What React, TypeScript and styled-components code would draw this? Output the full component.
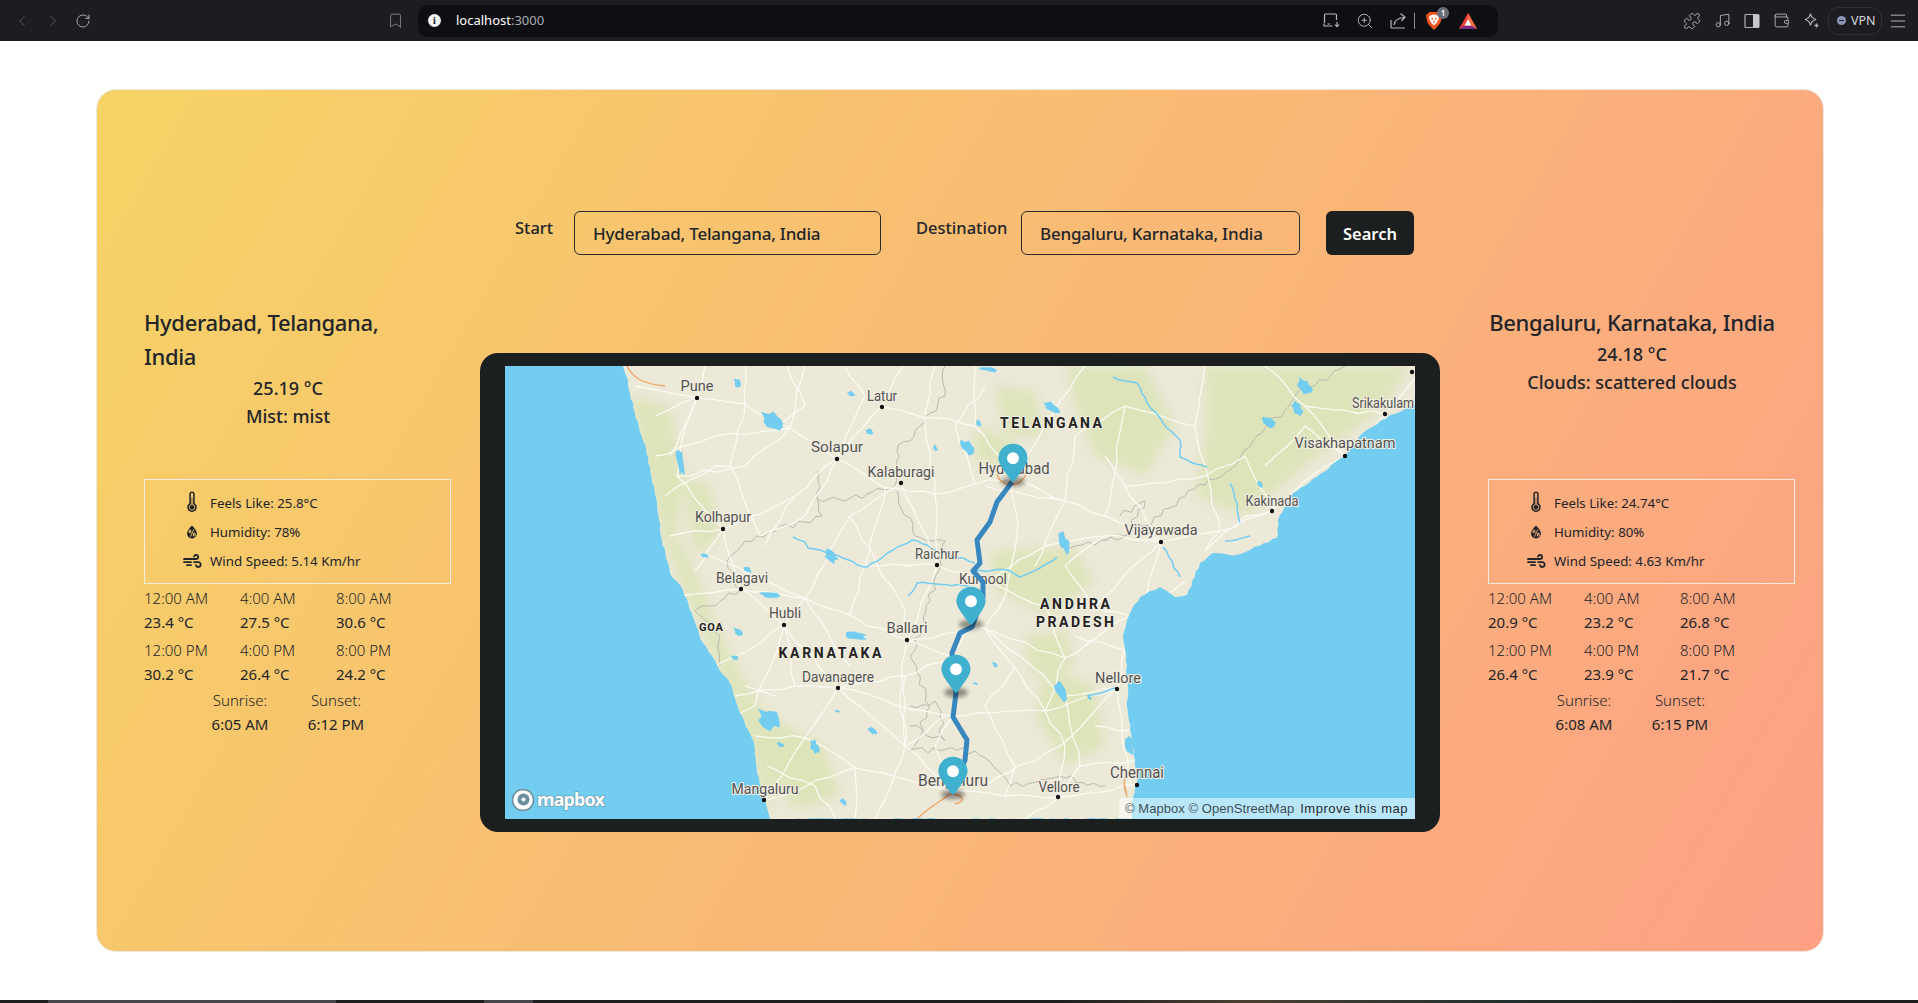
import React from 'react';
import styled, { createGlobalStyle } from 'styled-components';
import {
  ChevronLeft,
  ChevronRight,
  RotateCw,
  Bookmark,
  ZoomIn,
  Puzzle,
  Music,
  Wallet,
  Menu,
} from 'lucide-react';
import { WiThermometer, WiHumidity } from 'react-icons/wi';

const GlobalStyle = createGlobalStyle`
  html, body {
    margin: 0;
    padding: 0;
    height: 100%;
    overflow: hidden;
    background: #fff;
  }
  body {
    font-family: "Noto Sans", "Open Sans", sans-serif;
    color: #212529;
  }
  * { box-sizing: border-box; }
`;

const Page = styled.div`
  display: flex;
  flex-direction: column;
  height: 100vh;
`;

/* browser chrome */
const BrowserBar = styled.div`
  display: flex;
  align-items: center;
  height: 41px;
  flex: none;
  background: #1c1c21;
  color: #b4b4b8;
`;

const NavGroup = styled.div`
  display: flex;
  align-items: center;
  gap: 13px;
  width: 418px;
  padding: 0 14px 0 13px;
  flex: none;
`;

const BookmarkSlot = styled.div`
  display: flex;
  margin-left: auto;
`;

const UrlBar = styled.div`
  display: flex;
  align-items: center;
  width: 1080px;
  height: 32px;
  padding: 0 21px 0 10px;
  flex: none;
  border-radius: 10px;
  background: #0e0f13;
`;

const InfoDot = styled.span`
  display: flex;
  align-items: center;
  justify-content: center;
  width: 13px;
  height: 13px;
  border-radius: 50%;
  background: #f2f2f2;
  color: #111;
  font: 700 10px "Liberation Serif", serif;
`;

const UrlText = styled.span`
  margin-left: 15px;
  padding-bottom: 2px;
  font: 400 13px "Noto Sans", sans-serif;
  color: #fff;
  span { color: #a9abb0; }
`;

const UrlTools = styled.div`
  display: flex;
  align-items: center;
  margin-left: auto;
  gap: 16px;
  color: #b5b5b8;
`;

const Divider = styled.i`
  display: block;
  width: 1px;
  height: 16px;
  margin: 0 -5px 0 -9px;
  background: #8c8c90;
`;

const ShieldWrap = styled.div`
  position: relative;
  display: flex;
  margin-right: 1px;
`;

const ShieldBadge = styled.span`
  position: absolute;
  top: -5px;
  right: -7px;
  width: 12px;
  height: 12px;
  border-radius: 50%;
  background: #6b6e78;
  color: #fff;
  font: 600 8px/12px "Noto Sans", sans-serif;
  text-align: center;
`;

const ExtGroup = styled.div`
  display: flex;
  align-items: center;
  margin-left: 185px;
  gap: 13px;
  flex: none;
`;

const VpnPill = styled.div`
  display: flex;
  align-items: center;
  gap: 5px;
  width: 54px;
  height: 28px;
  margin: 0 -7px 0 -5px;
  padding: 0 0 1px 8px;
  border: 1px solid #2f3036;
  border-radius: 11px;
  color: #d9d9dc;
  font: 400 12.5px "Noto Sans", sans-serif;
`;

const VpnDot = styled.i`
  position: relative;
  display: block;
  width: 9px;
  height: 9px;
  border-radius: 50%;
  background: #8d95b5;
  &::after {
    content: '';
    position: absolute;
    left: 2px;
    right: 2px;
    top: 4px;
    height: 1px;
    background: #1c1c21;
  }
`;

/* page body */
const Main = styled.main`
  flex: 1;
  padding: 48px 94px 0 96px;
`;

const Card = styled.section`
  height: 863px;
  padding-top: 121px;
  border: 1px solid #ece8e0;
  border-radius: 20px;
  background: linear-gradient(120deg, #f6d365 0%, #fda085 100%);
`;

const SearchRow = styled.form`
  display: flex;
  align-items: flex-start;
  height: 44px;
  padding-left: 418px;
`;

const FieldLabel = styled.label<{ $w: number; $pad?: number }>`
  width: ${(p) => p.$w}px;
  padding-left: ${(p) => p.$pad ?? 0}px;
  flex: none;
  font-size: 16.5px;
  line-height: 34px;
  font-weight: 500;
`;

const FieldInput = styled.input<{ $w: number }>`
  width: ${(p) => p.$w}px;
  height: 44px;
  flex: none;
  padding: 1px 18px 0;
  border: 1px solid #2a2a2a;
  border-radius: 6px;
  background: transparent;
  color: #212529;
  font: 500 17px "Noto Sans", sans-serif;
  letter-spacing: -0.2px;
  outline: none;
`;

const SearchButton = styled.button`
  width: 88px;
  height: 44px;
  margin-left: 26px;
  flex: none;
  border: 0;
  border-radius: 6px;
  background: #1c1f1f;
  color: #fff;
  font: 600 16.5px "Noto Sans", sans-serif;
`;

const Columns = styled.div`
  display: flex;
  align-items: flex-start;
  margin-top: 51px;
  padding-left: 47px;
`;

const WeatherCol = styled.div<{ $gap?: number }>`
  width: 307px;
  flex: none;
  margin-left: ${(p) => p.$gap ?? 0}px;
`;

const WeatherHead = styled.div`
  display: flow-root;
  width: 288px;
  height: 173px;
  text-align: center;
`;

const CityName = styled.h4<{ $center?: boolean }>`
  margin: -1px 0 1px;
  font-size: 22px;
  line-height: 34px;
  font-weight: 500;
  letter-spacing: -0.35px;
  white-space: ${(p) => (p.$center ? 'nowrap' : 'normal')};
  text-align: ${(p) => (p.$center ? 'center' : 'left')};
`;

const HeadLine = styled.div`
  font-size: 18px;
  line-height: 28px;
  font-weight: 500;
`;

const StatsBox = styled.div`
  display: flex;
  flex-direction: column;
  justify-content: center;
  height: 105px;
  padding-left: 33px;
  border: 1px solid #f1ece0;
`;

const StatRow = styled.div`
  display: flex;
  align-items: center;
  height: 29px;
  font-size: 13.3px;
  font-weight: 450;
`;

const StatIcon = styled.span`
  display: flex;
  justify-content: center;
  width: 28px;
  margin-right: 4px;
  flex: none;
`;

const HourGrid = styled.div`
  display: grid;
  grid-template-columns: repeat(3, 96px);
  row-gap: 2px;
  margin-top: 2px;
`;

const SunRow = styled.div`
  display: grid;
  grid-template-columns: repeat(2, 96px);
  margin-left: 48px;
  text-align: center;
`;

const SlotLabel = styled.div`
  font-size: 15px;
  line-height: 25px;
  font-weight: 300;
`;

const SlotValue = styled.div`
  margin: -1px 0 1px;
  font-size: 15px;
  line-height: 25px;
  font-weight: 450;
`;

const MapFrame = styled.div`
  width: 960px;
  height: 479px;
  flex: none;
  margin: 47px 0 0 29px;
  padding: 13px 25px;
  border-radius: 18px;
  background: #1c1f1f;
`;

const MapBox = styled.div`
  position: relative;
  width: 910px;
  height: 453px;
  overflow: hidden;
  background: #73cdf1;
  svg { display: block; }
`;

const Attribution = styled.div`
  position: absolute;
  right: 0;
  bottom: 0;
  display: flex;
  gap: 6px;
  width: 296px;
  height: 21px;
  padding: 0 5px 0 6px;
  background: rgba(255, 255, 255, 0.5);
  color: rgba(0, 0, 0, 0.7);
  font: 400 13px/21px "Liberation Sans", sans-serif;
  letter-spacing: 0.05px;
  white-space: nowrap;
  b { font-weight: 400; letter-spacing: 0.5px; color: rgba(0, 0, 0, 0.85); }
`;

const TaskStrip = styled.div`
  display: flex;
  height: 3px;
  flex: none;
  padding-left: 48px;
  background: linear-gradient(90deg, #1e1e1e 55%, #4a4032 65%, #23302e 78%, #1e1e1e 90%);
`;

const TaskSeg = styled.i<{ $w: number; $gap?: number }>`
  display: block;
  width: ${(p) => p.$w}px;
  margin-left: ${(p) => p.$gap ?? 0}px;
  background: #45454a;
`;

/* map helpers: straight polylines get a small wobble so they read as roads and rivers */
const noise = (n: number) => {
  const v = Math.sin(n * 12.9898) * 43758.5453;
  return v - Math.floor(v);
};

const roughen = (d: string, amp: number, step: number) => {
  const pts = (d.match(/-?\d+(\.\d+)?/g) ?? []).map(Number);
  let out = `M${pts[0]} ${pts[1]}`;
  for (let i = 2; i < pts.length; i += 2) {
    const [x0, y0, x1, y1] = [pts[i - 2], pts[i - 1], pts[i], pts[i + 1]];
    const len = Math.hypot(x1 - x0, y1 - y0);
    const parts = Math.max(1, Math.round(len / step));
    for (let k = 1; k <= parts; k += 1) {
      const t = k / parts;
      const off = k === parts ? 0 : (noise(x0 * 3 + y1 * 7 + k) - 0.5) * 2 * amp;
      const x = x0 + (x1 - x0) * t + (-(y1 - y0) / (len || 1)) * off;
      const y = y0 + (y1 - y0) * t + ((x1 - x0) / (len || 1)) * off;
      out += `L${x.toFixed(1)} ${y.toFixed(1)}`;
    }
  }
  return out;
};

const blob = (x0: number, x1: number, y0: number, y1: number, i: number) => {
  const cx = (x0 + x1) / 2;
  const cy = (y0 + y1) / 2;
  const rx = (x1 - x0) / 2;
  const ry = (y1 - y0) / 2;
  let out = '';
  for (let k = 0; k < 12; k += 1) {
    const a = (k / 12) * Math.PI * 2;
    const r = 0.55 + noise(i * 5.1 + k) * 0.6;
    // slant so the long lakes lie from top left to bottom right
    const dx = Math.cos(a) * rx * r;
    const dy = Math.sin(a) * ry * r + (dx / (rx || 1)) * ry * 0.45;
    out += `${k ? 'L' : 'M'}${(cx + dx).toFixed(1)} ${(cy + dy).toFixed(1)}`;
  }
  return `${out}Z`;
};

/* map data, in map pixels (910 x 453) */
const LAND = `${roughen(
  'M118 0L123 14L125 27L130 47L138 74L145 101L152 137L157 174L165 207L178 224L188 251L198 277L212 299L225 317L235 347L248 374L252 407L258 431L265 453L627 453L628 431L632 417L630 394L625 364L622 341L623 321L620 284L618 271L625 247L635 231L655 221L670 231L682 229L695 197L708 187L732 189L772 172L773 154L788 127L812 111L838 91L858 67L885 49L910 39L910 0',
  0.9,
  5,
)}Z`;

const GREENS = [
  'M125 30L165 40L178 110L172 170L195 215L212 260L232 300L262 350L272 400L262 453L250 400L225 330L190 250L160 180L138 90Z',
  'M265 350L320 380L335 430L290 445L262 400Z',
  'M560 0L640 0L670 60L640 110L590 90L570 40Z',
  'M700 0L905 0L880 40L800 100L740 150L690 130L700 70Z',
  'M490 20L530 25L540 70L500 70Z',
  'M485 185L565 180L590 215L545 250L490 225Z',
  'M540 300L590 320L600 380L560 400L530 350Z',
  'M470 60L510 75L500 100L470 95Z',
  'M178 110L205 120L215 170L190 190Z',
  'M520 270L560 265L570 300L525 310Z',
];

const ROADS = [
  'M192 32L240 38L285 62L332 93L380 122L430 128L470 118L508 112',
  'M192 32L178 70L172 110L218 163L236 223L279 259L333 322L400 380L447 420',
  'M218 163L290 130L332 93L377 41L398 0',
  'M236 223L300 232L402 274L447 291L466 258',
  'M279 259L242 285L212 299',
  'M333 322L300 372L260 434',
  'M448 425L500 430L554 431L632 419',
  'M448 425L350 402L262 434',
  'M508 112L560 135L600 150L656 176L715 165L767 145L800 115L840 90L880 48L910 12',
  'M656 176L640 240L620 284L612 323L625 420',
  'M508 112L540 60L580 0',
  'M508 112L512 170L500 230L480 262L560 330L612 323',
  'M656 176L600 170L540 180L478 216L432 199L396 117',
  'M432 199L402 274L395 330L400 380',
  'M448 350L540 345L612 323',
  'M466 258L560 292L625 250',
  'M192 32L150 50',
  'M192 32L165 90',
  'M240 38L225 100L255 170L300 150L332 93',
  'M300 0L285 62L240 100L172 110',
  'M377 41L470 60L508 112',
  'M430 128L432 199',
  'M396 117L345 150L300 232',
  'M345 150L400 245L402 274',
  'M218 163L190 205',
  'M279 259L250 340L235 347',
  'M333 322L420 345L448 350',
  'M447 291L400 310L333 322',
  'M448 425L430 380L448 350',
  'M554 431L560 380L540 345L480 262',
  'M554 431L520 453',
  'M612 323L555 380L480 420',
  'M560 135L570 70L620 40L690 60L700 0',
  'M620 40L600 150',
  'M690 60L715 165L700 185',
  'M560 135L480 120',
  'M478 216L540 240L560 292L540 345',
  'M656 176L590 240L625 250',
  'M282 0L300 40L270 60',
  'M160 130L210 100L225 100',
  'M270 330L240 320',
  'M350 402L350 453',
  'M400 380L370 453',
  'M300 372L350 402',
  'M740 90L770 145',
  'M800 40L840 90',
  'M760 0L800 40L880 48',
  'M130 20L192 32L200 0',
  'M240 0L240 38',
  'M340 0L360 30L332 93',
  'M430 0L420 60L430 128',
  'M470 0L470 60',
  'M150 90L210 70L285 62',
  'M165 170L218 163',
  'M175 230L236 223',
  'M205 190L300 232L345 300',
  'M260 180L290 130',
  'M300 232L279 259L290 320L333 322',
  'M380 122L360 200L345 250',
  'M360 200L432 199',
  'M230 330L290 320',
  'M250 370L300 372',
  'M262 400L310 420',
  'M310 420L330 453',
  'M480 262L402 274',
  'M400 310L400 380L440 350',
  'M510 300L480 340L510 400L500 430',
  'M560 330L575 400L554 431',
  'M590 360L625 364',
  'M575 400L628 395',
  'M590 240L560 200L600 170',
  'M640 240L680 215',
  'M620 284L570 270',
  'M700 185L740 150L767 145',
  'M620 120L656 176',
  'M620 120L700 110L740 90',
  'M560 135L530 200',
  'M470 118L450 60L480 20',
  'M600 90L620 120',
  'M840 90L800 60L760 100',
];

const BORDERS = [
  'M313 105L312 132L340 135L390 120L392 85L415 60L440 30L440 0',
  'M312 132L317 150L270 165L240 175L222 195L235 225L205 240L190 245L215 270L215 300',
  'M392 125L410 170L440 175L425 235L405 290L425 340L405 385L470 385L505 420L555 410L600 420',
  'M600 175L640 160L680 130L730 100L790 30L840 0',
  'M560 185L620 170L640 135L615 150',
  'M405 340L430 335L440 375L405 360',
];

const RIVERS = [
  'M288 171L300 176L303 182L322 187L338 192L352 199L362 201L388 184L407 174L422 179L435 186L470 197',
  'M403 230L412 217L464 220',
  'M470 205L503 204L515 211L535 202L552 191',
  'M608 11L632 17L642 37L658 57L675 74L675 91L702 101',
  'M725 117L732 137L735 157',
  'M658 181L675 211',
  'M582 330L610 322',
  'M720 175L745 170',
];

const LAKES: [number, number, number, number][] = [
  [253, 284, 44, 66],
  [228, 237, 12, 22],
  [342, 350, 25, 30],
  [360, 368, 62, 69],
  [428, 433, 79, 86],
  [318, 333, 184, 197],
  [238, 247, 201, 207],
  [253, 278, 226, 232],
  [228, 238, 261, 272],
  [337, 363, 264, 274],
  [225, 235, 289, 294],
  [195, 203, 187, 192],
  [252, 278, 342, 364],
  [330, 335, 344, 347],
  [363, 372, 360, 369],
  [272, 280, 376, 382],
  [305, 315, 374, 389],
  [335, 343, 432, 440],
  [552, 565, 166, 187],
  [455, 473, 74, 89],
  [470, 477, 54, 61],
  [537, 555, 36, 47],
  [757, 773, 51, 62],
  [790, 807, 12, 27],
  [787, 798, 36, 49],
  [752, 758, 114, 121],
  [582, 587, 329, 334],
  [548, 562, 314, 334],
  [618, 630, 367, 391],
  [487, 493, 296, 301],
  [468, 473, 316, 319],
  [475, 495, 1, 6],
  [170, 180, 80, 110],
];

const LABELS: [string, number, number, number, number][] = [
  ['Pune', 192, 25, 33, 15],
  ['Latur', 377, 35, 30, 14],
  ['Solapur', 332, 86, 52, 15],
  ['Kalaburagi', 396, 111, 67, 14],
  ['Kolhapur', 218, 156, 56, 14],
  ['Raichur', 432, 193, 44, 14],
  ['Belagavi', 237, 217, 52, 14],
  ['Hubli', 280, 252, 32, 14],
  ['Ballari', 402, 267, 41, 14],
  ['Davanagere', 333, 316, 72, 14],
  ['Mangaluru', 260, 428, 67, 15],
  ['Bengaluru', 448, 420, 70, 16],
  ['Hyderabad', 509, 108, 71, 16],
  ['Kurnool', 478, 218, 48, 14],
  ['Vijayawada', 656, 169, 73, 15],
  ['Kakinada', 767, 140, 53, 14],
  ['Visakhapatnam', 840, 82, 101, 15],
  ['Srikakulam', 878, 42, 62, 14],
  ['Nellore', 613, 317, 46, 14],
  ['Chennai', 632, 412, 54, 16],
  ['Vellore', 554, 426, 41, 14],
];

const DOTS = [
  [192, 32], [377, 41], [332, 93], [396, 117], [218, 163], [432, 199], [236, 223], [279, 259],
  [402, 274], [333, 322], [259, 434], [656, 176], [767, 145], [840, 90], [880, 48], [907, 6],
  [612, 323], [632, 419], [553, 431],
];

const REGIONS: [string, number, number, number, number][] = [
  ['TELANGANA', 546, 62, 102, 14],
  ['ANDHRA', 570, 243, 70, 14],
  ['PRADESH', 570, 261, 78, 14],
  ['KARNATAKA', 325, 292, 103, 14],
  ['GOA', 206, 265, 24, 11],
];

const PIN =
  'M27 13.5C27 19.07 20.25 27 14.75 34.5C14.02 35.5 12.98 35.5 12.25 34.5C6.75 27 0 19.22 0 13.5C0 6.04 6.04 0 13.5 0C20.96 0 27 6.04 27 13.5Z';

const PINS = [
  [508, 116],
  [466, 259],
  [451, 327],
  [448, 429],
];

const RouteMap = () => (
  <svg width="910" height="453" viewBox="0 0 910 453">
    <defs>
      <filter id="soft" x="-20%" y="-20%" width="140%" height="140%">
        <feGaussianBlur stdDeviation="6" />
      </filter>
      <filter id="shade" x="-50%" y="-100%" width="200%" height="300%">
        <feGaussianBlur stdDeviation="2" />
      </filter>
      <clipPath id="landClip">
        <path d={LAND} />
      </clipPath>
    </defs>
    <path d={LAND} fill="#ece9d9" />
    <g clipPath="url(#landClip)">
      <g filter="url(#soft)" fill="#d8e2ad" opacity="0.7">
        {GREENS.map((d) => (
          <path key={d} d={d} />
        ))}
      </g>
      <g fill="none" stroke="#b9b9b0" strokeWidth="1">
        {BORDERS.map((d) => (
          <path key={d} d={roughen(d, 3.5, 6)} />
        ))}
      </g>
      <g fill="none" stroke="#fbfaf3" strokeWidth="1.3" strokeLinejoin="round">
        {ROADS.map((d) => (
          <path key={d} d={roughen(d, 2.2, 14)} />
        ))}
      </g>
      <g fill="none" stroke="#73cdf1" strokeWidth="1.5" strokeLinejoin="round">
        {RIVERS.map((d) => (
          <path key={d} d={roughen(d, 1.2, 6)} />
        ))}
      </g>
      <g fill="#73cdf1">
        {LAKES.map(([x0, x1, y0, y1], i) => (
          <path key={`${x0}-${y0}`} d={blob(x0, x1, y0, y1, i + 1)} />
        ))}
      </g>
      <g fill="none" stroke="#f2a25f" strokeWidth="1.3">
        <path d="M122 0C128 12 138 18 160 20" />
        <path d="M492 108C495 122 520 125 523 100" />
        <path d="M412 453C425 440 435 436 445 428C458 428 462 436 450 438" />
        <path d="M622 430C616 414 620 410 626 408M620 420L622 431" />
      </g>
    </g>
    <g
      fontFamily="Roboto, 'Noto Sans', sans-serif"
      fill="#525252"
      textAnchor="middle"
      stroke="#f3efe2"
      strokeWidth="2"
      paintOrder="stroke"
    >
      {LABELS.map(([name, x, y, w, size]) => (
        <text key={name} x={x} y={y} fontSize={size} textLength={w} lengthAdjust="spacingAndGlyphs">
          {name}
        </text>
      ))}
    </g>
    <g
      fontFamily="Roboto, 'Noto Sans', sans-serif"
      fontWeight="700"
      fill="#222"
      textAnchor="middle"
      stroke="#f3efe2"
      strokeWidth="2"
      paintOrder="stroke"
    >
      {REGIONS.map(([name, x, y, w, size]) => (
        <text key={name} x={x} y={y} fontSize={size} textLength={w}>
          {name}
        </text>
      ))}
    </g>
    <g fill="#111">
      {DOTS.map(([x, y]) => (
        <circle key={`${x}-${y}`} cx={x} cy={y} r="2.2" />
      ))}
    </g>
    <path
      d="M507 116L492 136L485 156L472 174L475 197L468 205L478 216L478 231L467 261L455 267L447 287L451 327L448 351L462 374L460 394L448 424"
      fill="none"
      stroke="#3887be"
      strokeWidth="5"
      strokeLinejoin="round"
    />
    {PINS.map(([x, y]) => (
      <g key={x} transform={`translate(${x - 14.6} ${y - 38.3}) scale(1.08)`}>
        <ellipse cx="13.5" cy="35" rx="11" ry="4.5" fill="#000" opacity="0.4" filter="url(#shade)" />
        <path d={PIN} fill="#3fb1ce" />
        <circle cx="13.5" cy="13.5" r="5.5" fill="#fff" />
      </g>
    ))}
    <g>
      <circle cx="18" cy="434" r="10.5" fill="#fff" stroke="#6a8f9e" strokeWidth="1.5" />
      <circle cx="18.5" cy="433.5" r="6" fill="#6a8f9e" />
      <circle cx="18.5" cy="433.5" r="2" fill="#fff" />
      <text
        x="32"
        y="440"
        fontFamily="'Noto Sans', sans-serif"
        fontSize="18"
        fontWeight="700"
        fill="#fff"
        stroke="#6a8f9e"
        strokeWidth="1.2"
        paintOrder="stroke"
        textLength={68}
      >
        mapbox
      </text>
    </g>
  </svg>
);

const ScreenIcon = () => (
  <svg width="17" height="15" viewBox="0 0 17 15" fill="none" stroke="currentColor" strokeWidth="1.2">
    <path d="M1.5 10V2.2C1.5 1.6 2 1 2.6 1H12.4C13 1 13.5 1.6 13.5 2.2V7" />
    <path d="M1 10.5V13H9.5M4.5 11H7" />
    <path d="M14 9V13.5M12 11.6L14 13.6L16 11.6" />
  </svg>
);

const ShareIcon = () => (
  <svg width="17" height="17" viewBox="0 0 17 17" fill="none" stroke="currentColor" strokeWidth="1.2">
    <path d="M1 8V15C1 15.6 1.4 16 2 16H15" />
    <path d="M4 13C4.5 9 7.5 6 14 5.5M10.5 1.5L15 5L11.5 9" />
  </svg>
);

const BraveIcon = () => (
  <svg width="16" height="18" viewBox="0 0 16 18">
    <path d="M3.5 0H12.5L14 1.5L16 3L15 9C14.5 12 11 15 8 18C5 15 1.5 12 1 9L0 3L2 1.5Z" fill="#f1541e" />
    <path d="M4 3.5L8 2.5L12 3.5L13 6L11 10.5L8 13.5L5 10.5L3 6Z" fill="#fff" />
    <path d="M5.5 6L7 7.5M10.5 6L9 7.5M8 9V11" stroke="#f1541e" strokeWidth="1.2" />
  </svg>
);

const BatIcon = () => (
  <svg width="18" height="16" viewBox="0 0 18 16">
    <path d="M9 0L18 16H0Z" fill="#ec3d3a" />
    <path d="M9 0L18 16L13 13L9 5Z" fill="#f4703c" />
    <path d="M0 16L5 13H13L18 16Z" fill="#7a2b8a" />
    <path d="M9 6L12.5 12.5H5.5Z" fill="#fff" />
  </svg>
);

const PanelIcon = () => (
  <svg width="16" height="16" viewBox="0 0 16 16" fill="none">
    <rect x="1" y="1.5" width="14" height="13" rx="1" stroke="#b0b0b4" strokeWidth="1.2" />
    <rect x="9" y="1.5" width="6" height="13" fill="#c7c7ca" />
  </svg>
);

const SparkleIcon = () => (
  <svg width="17" height="17" viewBox="0 0 17 17" fill="none" stroke="currentColor" strokeWidth="1.2">
    <path d="M7.5 1.5C8 5 9.5 6.6 13 7.5C9.5 8.4 8 10 7.5 13.5C7 10 5.5 8.4 2 7.5C5.5 6.6 7 5 7.5 1.5Z" />
    <path d="M13.5 11.5V15.5M11.5 13.5H15.5" strokeWidth="1.4" />
  </svg>
);

const WindIcon = () => (
  <svg width="19" height="14" viewBox="0 0 19 14" fill="none" stroke="currentColor" strokeWidth="1.8" strokeLinecap="round">
    <path d="M1 5H13C15.8 5 16 1 13.2 1C12 1 11.2 1.7 11 2.6" />
    <path d="M1 8.2H8" />
    <path d="M4 11.2H8" />
    <path d="M11 8.2H15.5C18.4 8.2 18.4 13 15.3 13C14 13 13.2 12.2 13 11.2" />
  </svg>
);

type Slot = { time: string; temp: string };
type Weather = {
  city: string;
  center?: boolean;
  temp: string;
  desc: string;
  feels: string;
  humidity: string;
  wind: string;
  hours: Slot[];
  sunrise: string;
  sunset: string;
};

const hourLabels = ['12:00 AM', '4:00 AM', '8:00 AM', '12:00 PM', '4:00 PM', '8:00 PM'];
const toSlots = (temps: string[]): Slot[] => temps.map((temp, i) => ({ time: hourLabels[i], temp: `${temp} °C` }));

const start: Weather = {
  city: 'Hyderabad, Telangana, India',
  temp: '25.19 °C',
  desc: 'Mist: mist',
  feels: '25.8°C',
  humidity: '78%',
  wind: '5.14 Km/hr',
  hours: toSlots(['23.4', '27.5', '30.6', '30.2', '26.4', '24.2']),
  sunrise: '6:05 AM',
  sunset: '6:12 PM',
};

const destination: Weather = {
  city: 'Bengaluru, Karnataka, India',
  center: true,
  temp: '24.18 °C',
  desc: 'Clouds: scattered clouds',
  feels: '24.74°C',
  humidity: '80%',
  wind: '4.63 Km/hr',
  hours: toSlots(['20.9', '23.2', '26.8', '26.4', '23.9', '21.7']),
  sunrise: '6:08 AM',
  sunset: '6:15 PM',
};

const WeatherPanel = ({ data, gap }: { data: Weather; gap?: number }) => (
  <WeatherCol $gap={gap}>
    <WeatherHead>
      <CityName $center={data.center}>{data.city}</CityName>
      <HeadLine>{data.temp}</HeadLine>
      <HeadLine>{data.desc}</HeadLine>
    </WeatherHead>
    <StatsBox>
      <StatRow>
        <StatIcon>
          <WiThermometer size={28} />
        </StatIcon>
        Feels Like: {data.feels}
      </StatRow>
      <StatRow>
        <StatIcon>
          <WiHumidity size={20} />
        </StatIcon>
        Humidity: {data.humidity}
      </StatRow>
      <StatRow>
        <StatIcon>
          <WindIcon />
        </StatIcon>
        Wind Speed: {data.wind}
      </StatRow>
    </StatsBox>
    <HourGrid>
      {data.hours.map((h) => (
        <div key={h.time}>
          <SlotLabel>{h.time}</SlotLabel>
          <SlotValue>{h.temp}</SlotValue>
        </div>
      ))}
    </HourGrid>
    <SunRow>
      <div>
        <SlotLabel>Sunrise:</SlotLabel>
        <SlotValue>{data.sunrise}</SlotValue>
      </div>
      <div>
        <SlotLabel>Sunset:</SlotLabel>
        <SlotValue>{data.sunset}</SlotValue>
      </div>
    </SunRow>
  </WeatherCol>
);

const App = () => (
  <Page>
    <GlobalStyle />
    <BrowserBar>
      <NavGroup>
        <ChevronLeft size={18} strokeWidth={1.2} color="#5e5e64" />
        <ChevronRight size={18} strokeWidth={1.2} color="#5e5e64" />
        <RotateCw size={16} strokeWidth={1.4} color="#b5b5b8" />
        <BookmarkSlot>
          <Bookmark size={17} strokeWidth={1.2} color="#8d8d92" />
        </BookmarkSlot>
      </NavGroup>
      <UrlBar>
        <InfoDot>i</InfoDot>
        <UrlText>
          localhost<span>:3000</span>
        </UrlText>
        <UrlTools>
          <ScreenIcon />
          <ZoomIn size={18} strokeWidth={1.3} />
          <ShareIcon />
          <Divider />
          <ShieldWrap>
            <BraveIcon />
            <ShieldBadge>1</ShieldBadge>
          </ShieldWrap>
          <BatIcon />
        </UrlTools>
      </UrlBar>
      <ExtGroup>
        <Puzzle size={18} strokeWidth={1.2} />
        <Music size={17} strokeWidth={1.3} />
        <PanelIcon />
        <Wallet size={17} strokeWidth={1.3} />
        <SparkleIcon />
        <VpnPill>
          <VpnDot />
          VPN
        </VpnPill>
        <Menu size={20} strokeWidth={1.2} />
      </ExtGroup>
    </BrowserBar>
    <Main>
      <Card>
        <SearchRow onSubmit={(e) => e.preventDefault()}>
          <FieldLabel $w={59}>Start</FieldLabel>
          <FieldInput $w={307} defaultValue="Hyderabad, Telangana, India" />
          <FieldLabel $w={140} $pad={35}>
            Destination
          </FieldLabel>
          <FieldInput $w={279} defaultValue="Bengaluru, Karnataka, India" />
          <SearchButton type="button">Search</SearchButton>
        </SearchRow>
        <Columns>
          <WeatherPanel data={start} />
          <MapFrame>
            <MapBox>
              <RouteMap />
              <Attribution>
                <span>© Mapbox © OpenStreetMap</span>
                <b>Improve this map</b>
              </Attribution>
            </MapBox>
          </MapFrame>
          <WeatherPanel data={destination} gap={48} />
        </Columns>
      </Card>
    </Main>
    <TaskStrip>
      <TaskSeg $w={288} />
      <TaskSeg $w={49} $gap={148} />
    </TaskStrip>
  </Page>
);

export default App;
